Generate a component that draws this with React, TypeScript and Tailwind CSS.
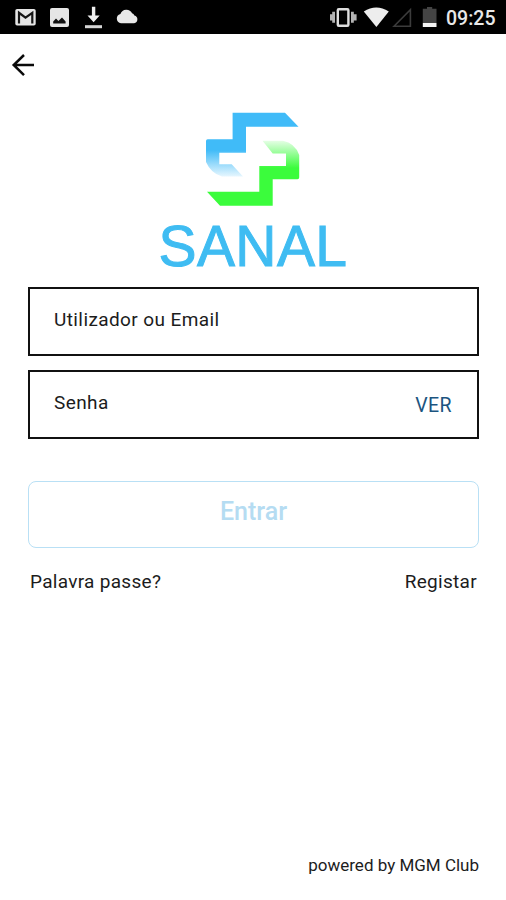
function StatusBar() {
  return (
    <div className="h-[34px] bg-black flex items-center justify-between text-[#e8e8e8]">
      <svg className="w-[150px] h-[34px]" viewBox="0 0 150 34" fill="none">
        <rect x="15.3" y="9" width="20.4" height="16.6" rx="1.8" fill="#e6e6e6" />
        <path d="M19 23.5V12.8L25.5 17.6L32.3 12.8V23.5" stroke="#161616" strokeWidth="2.2" />
        <path d="M52 8h15a2 2 0 0 1 2 2v15a2 2 0 0 1-2 2h-15a2 2 0 0 1-2-2v-15a2 2 0 0 1 2-2z" fill="#e6e6e6" />
        <path d="M53.2 23.4v-2l2.8-2.8 2.4 2.4 3.6-3.6 3.6 4v2z" fill="#111" />
        <path d="M91.9 6.8h3.4v8.6h4.4l-6.1 6.9-6.1-6.9h4.4z" fill="#f0f0f0" />
        <rect x="85" y="25.2" width="17" height="3" fill="#d5d5d5" />
        <path
          d="M121 23.3a4.8 4.8 0 0 1-.6-9.4 6.4 6.4 0 0 1 11.7-.6 4 4 0 0 1 2.3 2.2 4 4 0 0 1-.3 7.8z"
          fill="#e8e8e8"
        />
      </svg>
      <div className="flex items-center">
        <svg className="w-[116px] h-[34px]" viewBox="0 0 116 34" fill="none">
          <path d="M.8 14.2v6.2M3.6 11.7v11" stroke="#b4b4b4" strokeWidth="2.8" />
          <path d="M25.2 14.2v6.2M22.4 11.7v11" stroke="#b4b4b4" strokeWidth="2.8" />
          <rect x="7.8" y="9.2" width="10.6" height="16.6" rx="1" stroke="#dedede" strokeWidth="2.4" />
          <path d="M33.8 11.4q12.4-7.6 25 0L46.4 27z" fill="#ededed" />
          <path d="M64 26.2L80.4 9.8v16.4z" stroke="#3c3c3c" strokeWidth="1.6" />
          <path d="M97 7h5.2v1.8h4.3V23H92.8V8.8H97z" fill="#444" />
          <path d="M92.8 23h13.7v4H92.8z" fill="#f4f4f4" />
        </svg>
        <span className="w-[60px] pt-[4px] text-[19.5px] leading-none font-medium">09:25</span>
      </div>
    </div>
  );
}

function Logo() {
  return (
    <svg className="w-[94px] h-[94px]" viewBox="206 112 94 94">
      <defs>
        <linearGradient id="blue" gradientUnits="userSpaceOnUse" x1="0" y1="150" x2="0" y2="178">
          <stop offset="0" stopColor="#40bbf8" />
          <stop offset="1" stopColor="#40bbf8" stopOpacity="0.08" />
        </linearGradient>
        <linearGradient id="green" gradientUnits="userSpaceOnUse" x1="0" y1="168" x2="0" y2="139">
          <stop offset="0" stopColor="#3bfc3c" />
          <stop offset="1" stopColor="#3bfc3c" stopOpacity="0.08" />
        </linearGradient>
      </defs>
      <path
        d="M232.6 112.7H285L298.5 126.8H246V152.8H219.3V164.3H231.7L243 176.5H222Q211 173.5 206 162V141Q206 139.3 207.7 139.3H232.6Z"
        fill="url(#blue)"
      />
      <path
        d="M272.7 205.7H220L207 191.7H259.3V166H286V153.4H272.7L262.5 140.7H283Q295 143 299.2 155V177.5Q299.2 179.3 297.4 179.3H272.7Z"
        fill="url(#green)"
      />
    </svg>
  );
}

export default function App() {
  return (
    <div className="w-full h-[900px] bg-white flex flex-col font-[Roboto,sans-serif] text-[#1c1c1c]">
      <StatusBar />
      <header className="h-[78px] pt-[19px] pl-[11px]">
        <svg className="w-6 h-6" viewBox="0 0 24 24" fill="none" stroke="#0a0a0a" strokeWidth="2.5">
          <path d="M23 12H2.5M13 2L2.7 12L13 22.2" />
        </svg>
      </header>
      <div className="flex flex-col items-center">
        <Logo />
        <h1 className="mt-[12px] h-[57px] leading-[57px] text-[57px] tracking-[0.4px] text-[#3fbcf2] font-['Liberation_Sans',sans-serif] [-webkit-text-stroke:1px_#3fbcf2]">
          SANAL
        </h1>
      </div>
      <main className="mt-[12px] px-[28px] flex flex-col">
        <div className="w-[451px] h-[69px] border-2 border-[#111] pl-[24px] pt-[19px] text-[19px] leading-6 tracking-[0.4px]">
          Utilizador ou Email
        </div>
        <div className="w-[451px] mt-[14px] h-[69px] border-2 border-[#111] pl-[24px] pr-[25px] pt-[19px] flex justify-between text-[19px] leading-6 tracking-[0.4px]">
          <span>Senha</span>
          <button className="h-6 pt-[3px] text-[19.5px] text-[#1c5480]">VER</button>
        </div>
        <button className="w-[451px] mt-[42px] h-[67px] pb-[5px] border-[1.5px] border-[#b9e0f5] rounded-[8px] text-[25px] font-medium text-[#b5dcf2]">
          Entrar
        </button>
        <div className="w-[449px] mt-[22px] pl-[2px] flex justify-between text-[19px] leading-6 tracking-[0.3px]">
          <a>Palavra passe?</a>
          <a>Registar</a>
        </div>
      </main>
      <footer className="mt-auto pb-[23px] pr-[27px] text-right text-[17px] leading-6">powered by MGM Club</footer>
    </div>
  );
}
